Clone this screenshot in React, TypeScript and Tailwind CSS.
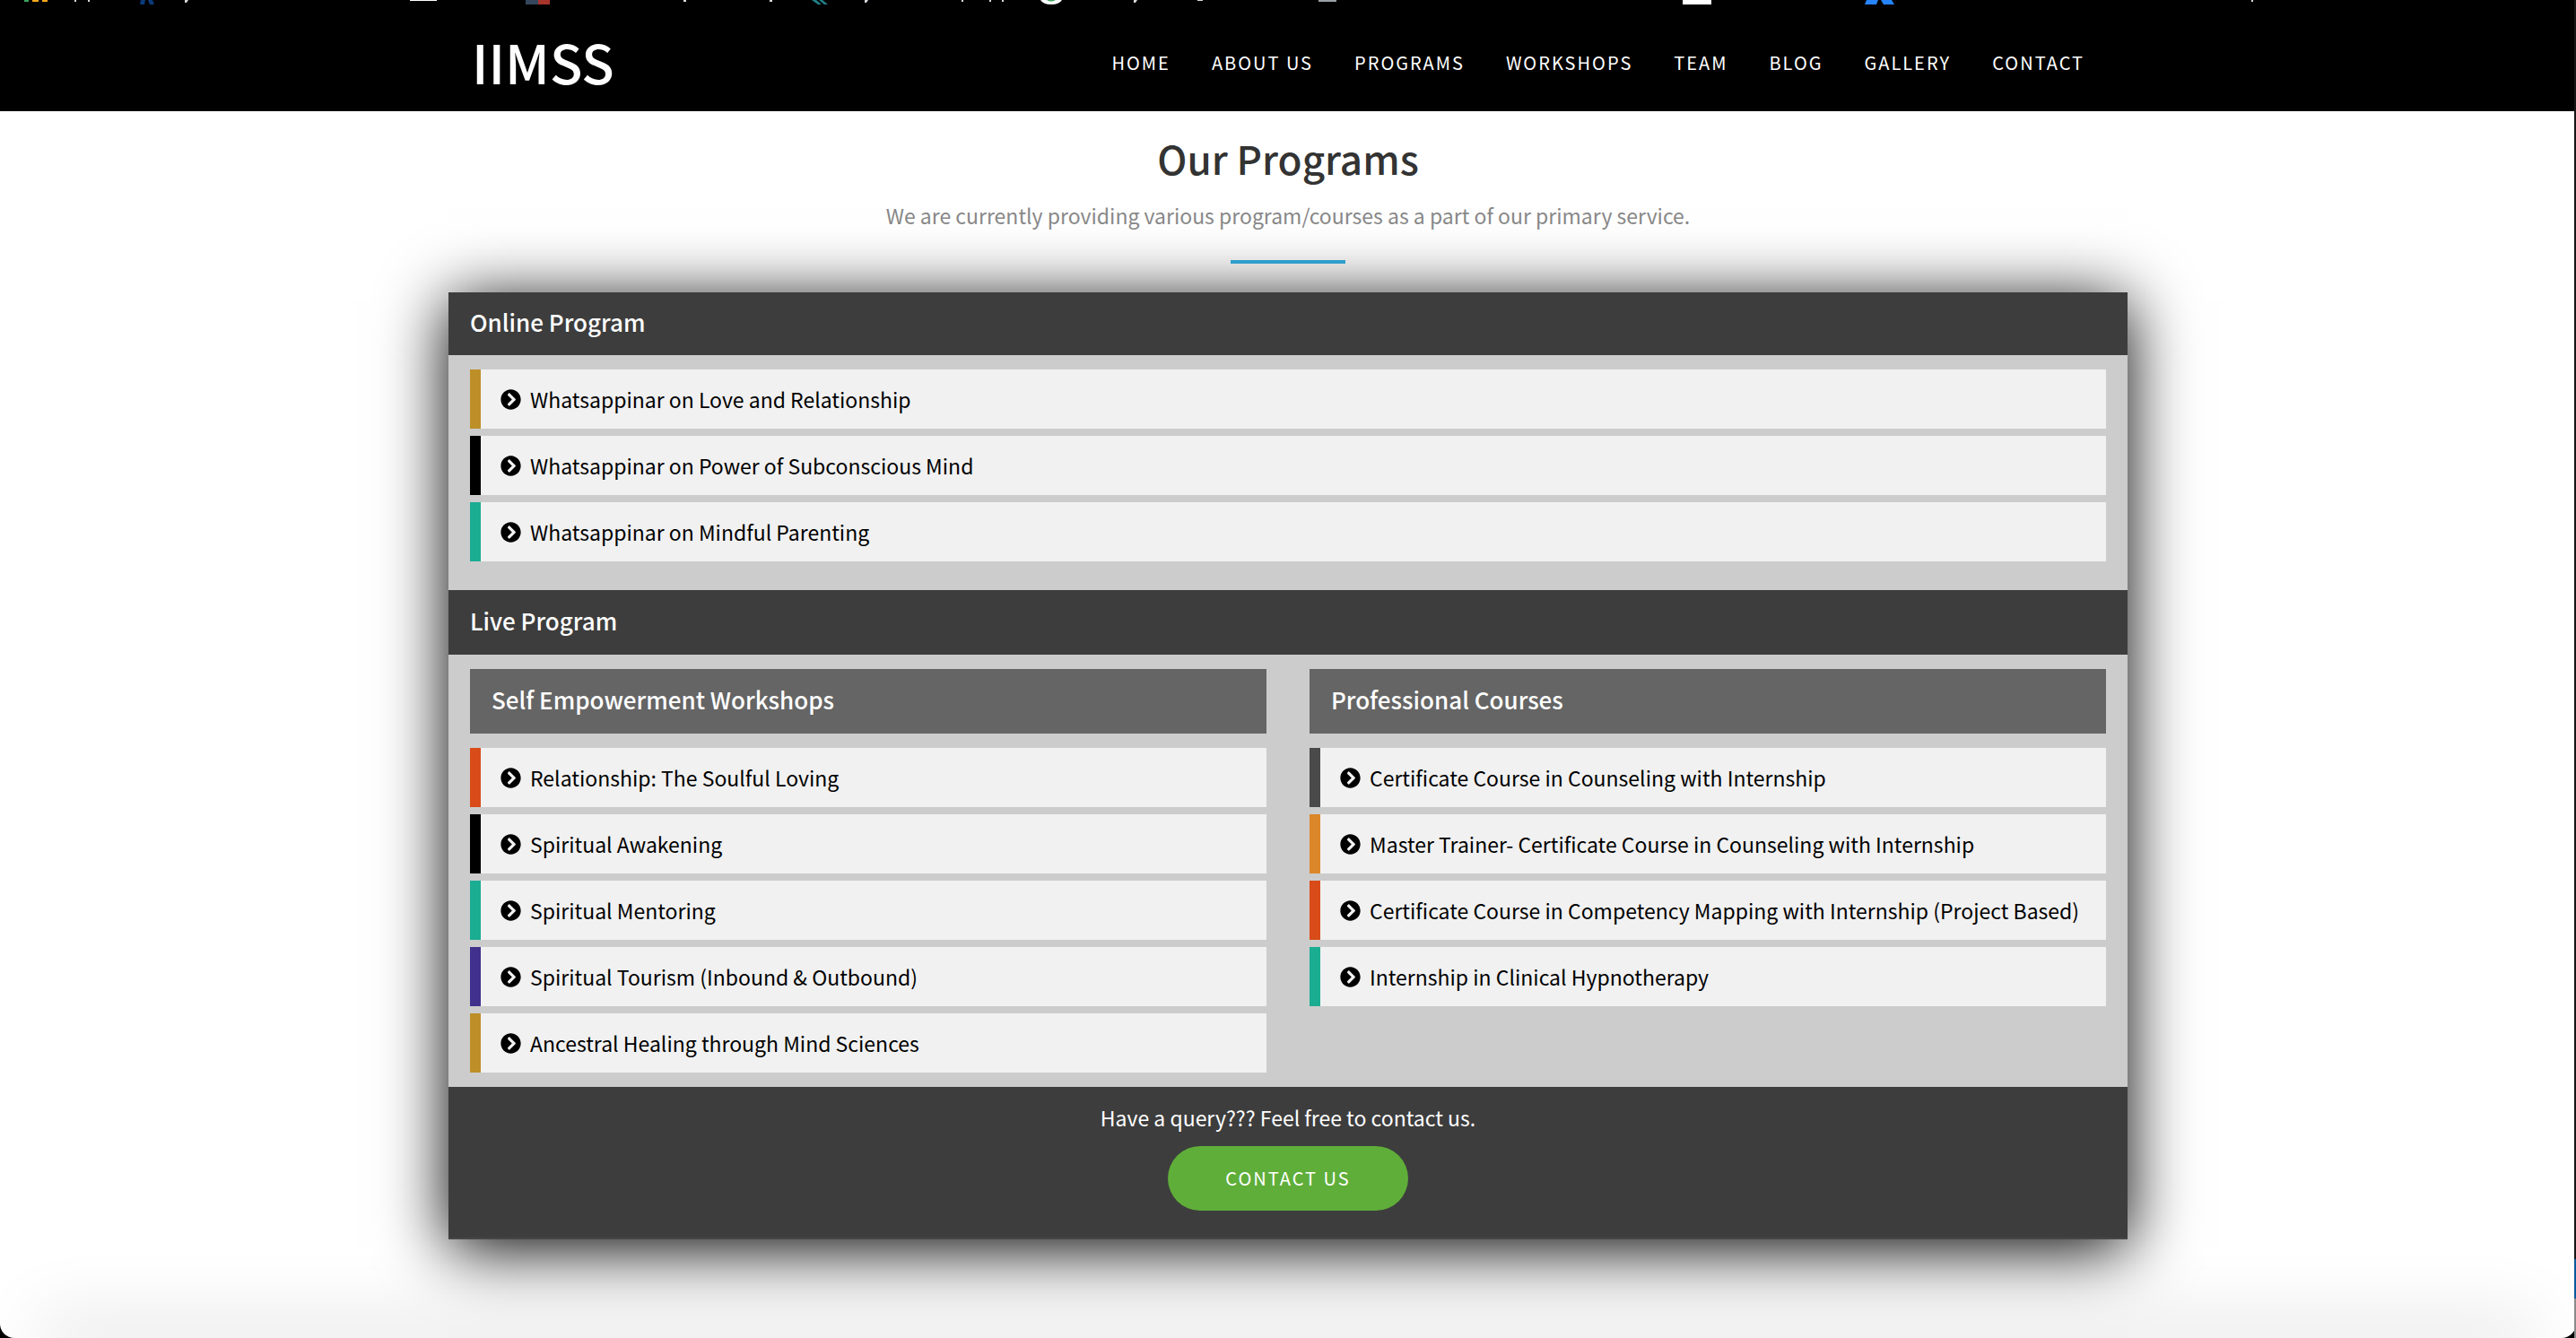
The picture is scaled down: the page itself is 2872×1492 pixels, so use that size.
import { FaChevronCircleRight } from "react-icons/fa";

type Item = { label: string; bar: string };

const online: Item[] = [
  { label: "Whatsappinar on Love and Relationship", bar: "border-[#bd8f28]" },
  { label: "Whatsappinar on Power of Subconscious Mind", bar: "border-black" },
  { label: "Whatsappinar on Mindful Parenting", bar: "border-[#1aad92]" },
];

const workshops: Item[] = [
  { label: "Relationship: The Soulful Loving", bar: "border-[#d94b18]" },
  { label: "Spiritual Awakening", bar: "border-black" },
  { label: "Spiritual Mentoring", bar: "border-[#1aad92]" },
  { label: "Spiritual Tourism (Inbound & Outbound)", bar: "border-[#41318d]" },
  { label: "Ancestral Healing through Mind Sciences", bar: "border-[#bd8f28]" },
];

const courses: Item[] = [
  { label: "Certificate Course in Counseling with Internship", bar: "border-[#4a4a4a]" },
  { label: "Master Trainer- Certificate Course in Counseling with Internship", bar: "border-[#db8628]" },
  { label: "Certificate Course in Competency Mapping with Internship (Project Based)", bar: "border-[#d94b18]" },
  { label: "Internship in Clinical Hypnotherapy", bar: "border-[#1aad92]" },
];

const links = ["Home", "About us", "Programs", "Workshops", "Team", "Blog", "Gallery", "Contact"];

function ProgramList({ items }: { items: Item[] }) {
  return (
    <ul className="flex flex-col gap-2">
      {items.map((item) => (
        <li key={item.label}>
          <a
            href="#"
            className={`flex h-[66px] items-center gap-[10px] border-l-[12px] bg-[#f1f1f1] pl-[22px] text-[23px] whitespace-nowrap text-black ${item.bar}`}
          >
            <FaChevronCircleRight className="size-[23px] shrink-0" />
            {item.label}
          </a>
        </li>
      ))}
    </ul>
  );
}

function BookmarkEdge() {
  return (
    <svg className="absolute top-0 left-0" width="2560" height="6" aria-hidden="true">
      <path d="M27 0h5v2h-5z" fill="#3da35d" />
      <path d="M36 0h7v2h-7zM47 0h6v2h-6z" fill="#f6a81c" />
      <path d="M157 0h5l-1 5h-5zM165 0h5l2 5h-5z" fill="#0b3a78" />
      <path d="M457 0h30v1h-30z" fill="#fff" />
      <path d="M586 0h14v5h-14z" fill="#33465c" />
      <path d="M600 0h13v5h-13z" fill="#a8342c" />
      <path d="M905 0h5l6 5h-4zM913 0h4l6 5h-4z" fill="#207f86" />
      <path d="M1160 0h24q-3 5-12 5t-12-5z" fill="#fff" />
      <path d="M1167 0h10q-5 3-10 0z" fill="#3da35d" />
      <path d="M1470 0h20v2h-20z" fill="#9aa0a6" />
      <path d="M1876 0h32v5h-32z" fill="#fff" />
      <path d="M2081 0h13l-2 5h-13zM2097 0h12l3 5h-12z" fill="#2684ff" />
      <path
        d="M83 0h2v2h-2zM98 0h2v2h-2zM206 0h4l-2 3h-2zM762 0h3v2h-3zM858 0h3v2h-3zM964 0h4l-2 3h-2zM1072 0h2v2h-2zM1103 0h2v2h-2zM1117 0h2v2h-2zM1264 0h4l-2 3h-2zM1335 0h6v1h-6zM2510 0h2v2h-2z"
        fill="#d5d8dc"
      />
    </svg>
  );
}

function WindowEdge() {
  return (
    <div className="absolute inset-y-0 right-0 flex w-0.5 flex-col bg-[#161616]" aria-hidden="true">
      <div className="mt-auto h-11 bg-[#0a5a9c]" />
      <div className="h-11 bg-[#8a8a8a]" />
    </div>
  );
}

export default function App() {
  return (
    <div className="relative bg-black font-['Noto_Sans_CJK_SC','Noto_Sans',sans-serif]">
      <div className="relative flex min-h-screen flex-col overflow-hidden rounded-b-2xl bg-white">
        <header className="relative h-[124px] bg-black text-white">
          <BookmarkEdge />
          <div className="mx-auto flex h-full max-w-[1872px] items-center justify-between px-[26px]">
            <a href="#" className="pt-3 text-[60px] leading-[64px] font-medium">
              IIMSS
            </a>
            <nav className="flex gap-[46px] pt-4 pr-[22px] text-[20px] leading-8 tracking-[2px] uppercase">
              {links.map((l) => (
                <a key={l} href="#">
                  {l}
                </a>
              ))}
            </nav>
          </div>
        </header>

        <main className="mx-auto w-full max-w-[1872px]">
          <div className="relative z-10 flex flex-col items-center pt-5">
            <h1 className="text-[44px] leading-[64px] font-medium text-[#333]">Our Programs</h1>
            <p className="mt-[14px] text-[23px] leading-9 text-[#888]">
              We are currently providing various program/courses as a part of our primary service.
            </p>
            <div className="mt-8 h-1 w-32 bg-[#2f9ecb]" />
          </div>

          <section className="mt-8 bg-[#ccc] shadow-[0_10px_70px_#000]">
            <h2 className="flex h-[70px] items-center bg-[#3d3d3d] px-6 pb-1 text-[26px] leading-9 font-medium text-white">
              Online Program
            </h2>
            <div className="px-6 pt-4 pb-8">
              <ProgramList items={online} />
            </div>
            <h2 className="flex h-[72px] items-center bg-[#3d3d3d] px-6 pb-1 text-[26px] leading-9 font-medium text-white">
              Live Program
            </h2>
            <div className="grid grid-cols-2 gap-12 px-6 py-4">
              <div className="flex flex-col gap-4">
                <h3 className="flex h-[72px] items-center bg-[#656565] px-6 pb-1 text-[26px] leading-9 font-medium text-white">
                  Self Empowerment Workshops
                </h3>
                <ProgramList items={workshops} />
              </div>
              <div className="flex flex-col gap-4">
                <h3 className="flex h-[72px] items-center bg-[#656565] px-6 pb-1 text-[26px] leading-9 font-medium text-white">
                  Professional Courses
                </h3>
                <ProgramList items={courses} />
              </div>
            </div>
            <div className="flex flex-col items-center border-b-2 border-[#464646] bg-[#3d3d3d] pt-4 pb-[30px] text-white">
              <p className="text-[23px] leading-9">Have a query??? Feel free to contact us.</p>
              <button
                type="button"
                className="mt-[14px] h-[72px] rounded-full bg-[#5fae3a] px-16 text-[20px] tracking-[2px] uppercase"
              >
                Contact us
              </button>
            </div>
          </section>
        </main>

        <footer className="mx-16 mt-auto h-0 shadow-[0_0_80px_20px_rgba(0,0,0,0.13)]" />
      </div>
      <WindowEdge />
    </div>
  );
}
